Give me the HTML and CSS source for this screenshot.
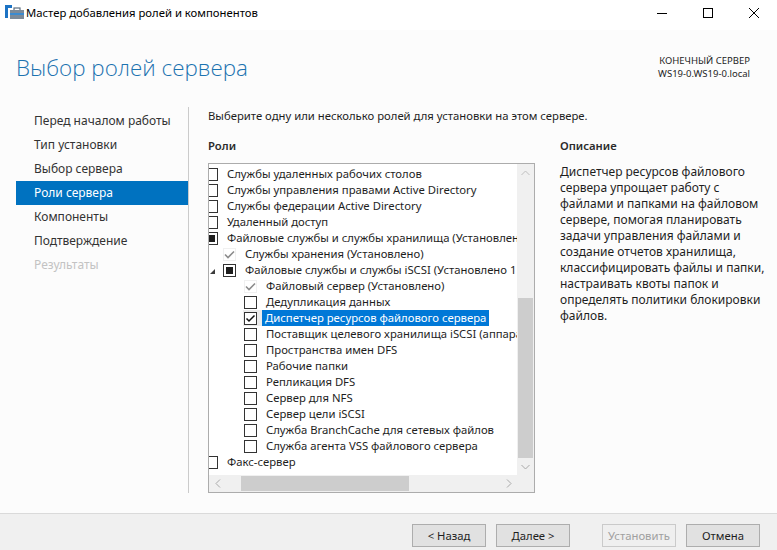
FILE: index.html
```html
<!DOCTYPE html>
<html lang="ru">
<head>
<meta charset="utf-8">
<title>Мастер добавления ролей и компонентов</title>
<link rel="stylesheet" href="styles.css">
</head>
<body>
<div class="window">
  <div class="titlebar">
    <svg class="app-icon" width="20" height="16" viewBox="0 0 20 16">
      <rect x="0" y="0" width="3" height="13" fill="#1d73c4"/>
      <rect x="0" y="0" width="7" height="3" fill="#1d73c4"/>
      <rect x="9" y="3" width="6" height="3" fill="none" stroke="#5d6f80" stroke-width="1.2"/>
      <rect x="5" y="5" width="14" height="9" fill="#7a8a99"/>
      <rect x="5" y="8" width="14" height="2" fill="#3a8bd0"/>
    </svg>
    <span class="title">Мастер добавления ролей и компонентов</span>
    <div class="controls">
      <span class="ctl"><svg width="10" height="10" viewBox="0 0 10 10"><path d="M0 5.5H10" stroke="#000" stroke-width="1"/></svg></span>
      <span class="ctl"><svg width="10" height="10" viewBox="0 0 10 10"><rect x="0.5" y="0.5" width="9" height="9" fill="none" stroke="#000" stroke-width="1"/></svg></span>
      <span class="ctl"><svg width="10" height="10" viewBox="0 0 10 10"><path d="M0 0L10 10M10 0L0 10" stroke="#000" stroke-width="1"/></svg></span>
    </div>
  </div>

  <div class="main">
    <div class="header">
      <h1 class="page-title">Выбор ролей сервера</h1>
      <div class="server">
        <div>КОНЕЧНЫЙ СЕРВЕР</div>
        <div>WS19-0.WS19-0.local</div>
      </div>
    </div>

    <div class="body">
      <nav class="nav">
        <div class="nav-item">Перед началом работы</div>
        <div class="nav-item">Тип установки</div>
        <div class="nav-item">Выбор сервера</div>
        <div class="nav-item active">Роли сервера</div>
        <div class="nav-item">Компоненты</div>
        <div class="nav-item">Подтверждение</div>
        <div class="nav-item disabled">Результаты</div>
      </nav>

      <div class="page">
        <p class="intro">Выберите одну или несколько ролей для установки на этом сервере.</p>
        <div class="cols">
          <div class="roles">
            <div class="section-label">Роли</div>
            <div class="listbox">
              <div class="viewport">
                <div class="tree">
                  <div class="row"><span class="cb"></span><span class="lbl">Службы удаленных рабочих столов</span></div>
                  <div class="row"><span class="cb"></span><span class="lbl">Службы управления правами Active Directory</span></div>
                  <div class="row"><span class="cb"></span><span class="lbl">Службы федерации Active Directory</span></div>
                  <div class="row"><span class="cb"></span><span class="lbl">Удаленный доступ</span></div>
                  <div class="row"><span class="cb partial"></span><span class="lbl">Файловые службы и службы хранилища (Установлено 3 из 12)</span></div>
                  <div class="row l1"><span class="indent"></span><span class="cb installed"><svg width="11" height="11" viewBox="0 0 11 11"><path d="M1 5.5L4 8.5L10 2.5" fill="none" stroke="#8c8c8c" stroke-width="1.6"/></svg></span><span class="lbl">Службы хранения (Установлено)</span></div>
                  <div class="row l1"><span class="indent"><span class="expander"></span></span><span class="cb partial"></span><span class="lbl">Файловые службы и службы iSCSI (Установлено 1 из 11)</span></div>
                  <div class="row l2"><span class="indent"></span><span class="cb installed"><svg width="11" height="11" viewBox="0 0 11 11"><path d="M1 5.5L4 8.5L10 2.5" fill="none" stroke="#8c8c8c" stroke-width="1.6"/></svg></span><span class="lbl">Файловый сервер (Установлено)</span></div>
                  <div class="row l2"><span class="indent"></span><span class="cb"></span><span class="lbl">Дедупликация данных</span></div>
                  <div class="row l2 selected"><span class="indent"></span><span class="hot"><span class="cb"><svg width="11" height="11" viewBox="0 0 11 11"><path d="M1.5 5.5L4 8L9.5 2.5" fill="none" stroke="#111" stroke-width="1.5"/></svg></span></span><span class="lbl">Диспетчер ресурсов файлового сервера</span></div>
                  <div class="row l2"><span class="indent"></span><span class="cb"></span><span class="lbl">Поставщик целевого хранилища iSCSI (аппаратный поставщик VDS и VSS)</span></div>
                  <div class="row l2"><span class="indent"></span><span class="cb"></span><span class="lbl">Пространства имен DFS</span></div>
                  <div class="row l2"><span class="indent"></span><span class="cb"></span><span class="lbl">Рабочие папки</span></div>
                  <div class="row l2"><span class="indent"></span><span class="cb"></span><span class="lbl">Репликация DFS</span></div>
                  <div class="row l2"><span class="indent"></span><span class="cb"></span><span class="lbl">Сервер для NFS</span></div>
                  <div class="row l2"><span class="indent"></span><span class="cb"></span><span class="lbl">Сервер цели iSCSI</span></div>
                  <div class="row l2"><span class="indent"></span><span class="cb"></span><span class="lbl">Служба BranchCache для сетевых файлов</span></div>
                  <div class="row l2"><span class="indent"></span><span class="cb"></span><span class="lbl">Служба агента VSS файлового сервера</span></div>
                  <div class="row"><span class="cb"></span><span class="lbl">Факс-сервер</span></div>
                </div>
              </div>
              <div class="vscroll">
                <div class="arrow"><svg width="9" height="6" viewBox="0 0 9 6"><path d="M0.5 5L4.5 1L8.5 5" fill="none" stroke="#bfbfbf"/></svg></div>
                <div class="vtrack"><div class="vthumb"></div></div>
                <div class="arrow"><svg width="9" height="6" viewBox="0 0 9 6"><path d="M0.5 1L4.5 5L8.5 1" fill="none" stroke="#a8a8a8"/></svg></div>
              </div>
              <div class="hscroll">
                <div class="arrow"><svg width="6" height="9" viewBox="0 0 6 9"><path d="M5 0.5L1 4.5L5 8.5" fill="none" stroke="#a8a8a8"/></svg></div>
                <div class="htrack"><div class="hthumb"></div></div>
                <div class="arrow"><svg width="6" height="9" viewBox="0 0 6 9"><path d="M1 0.5L5 4.5L1 8.5" fill="none" stroke="#a8a8a8"/></svg></div>
              </div>
              <div class="corner"></div>
            </div>
          </div>
          <div class="desc">
            <div class="section-label">Описание</div>
            <p class="desc-text">Диспетчер ресурсов файлового<br>сервера упрощает работу с<br>файлами и папками на файловом<br>сервере, помогая планировать<br>задачи управления файлами и<br>создание отчетов хранилища,<br>классифицировать файлы и папки,<br>настраивать квоты папок и<br>определять политики блокировки<br>файлов.</p>
          </div>
        </div>
      </div>
    </div>
  </div>

  <div class="footer">
    <button class="btn">&lt; Назад</button>
    <button class="btn">Далее &gt;</button>
    <button class="btn disabled-btn gap">Установить</button>
    <button class="btn">Отмена</button>
  </div>
</div>
</body>
</html>
```

FILE: styles.css
```css
* { box-sizing: border-box; }
html, body { margin: 0; padding: 0; }
body {
  font-family: "Noto Sans", "Open Sans", sans-serif;
  font-size: 11.3px;
  color: #1e1e1e;
  background: #fff;
}
.window {
  width: 777px;
  height: 550px;
  display: flex;
  flex-direction: column;
  overflow: hidden;
}

/* title bar */
.titlebar {
  height: 30px;
  flex: none;
  display: flex;
  align-items: center;
  background: #fff;
  padding: 0 0 5px 5px;
}
.app-icon { flex: none; margin-top: 1px; }
.title { margin-left: 1px; color: #000; font-size: 11.3px; }
.controls { margin-left: auto; display: flex; height: 25px; }
.ctl {
  width: 46px;
  height: 25px;
  display: flex;
  align-items: center;
  justify-content: center;
}

/* main */
.main {
  flex: 1;
  background: #fcfcfc;
  display: flex;
  flex-direction: column;
  padding-bottom: 20px;
}
.header {
  height: 77px;
  flex: none;
  display: flex;
  justify-content: space-between;
  align-items: flex-start;
}
.page-title {
  margin: 22px 0 0 16px;
  font-family: "Open Sans", "Noto Sans", sans-serif;
  font-size: 22.4px;
  line-height: 32px;
  font-weight: 300;
  color: #1c73b0;
}
.server {
  margin: 24px 27px 0 0;
  text-align: right;
  font-size: 9.5px;
  line-height: 13px;
  color: #1e1e1e;
}

.body {
  flex: 1;
  display: flex;
  min-height: 0;
}
.nav {
  width: 189px;
  flex: none;
  padding: 2px 0 0 16px;
  border-right: 1px solid #cbcbcb;
  font-size: 12px;
}
.nav-item {
  height: 24px;
  line-height: 24px;
  padding-left: 18px;
  color: #333;
  white-space: nowrap;
}
.nav-item.active { background: #0072c0; color: #fff; }
.nav-item.disabled { color: #c3c3c3; }

.page {
  flex: 1;
  padding-left: 19px;
  display: flex;
  flex-direction: column;
  min-width: 0;
}
.intro {
  margin: 1px 0 0 0;
  line-height: 16px;
}
.cols {
  flex: 1;
  display: flex;
  gap: 25px;
  margin-top: 14px;
  min-height: 0;
}
.roles {
  width: 327px;
  flex: none;
  display: flex;
  flex-direction: column;
}
.section-label {
  line-height: 16px;
  font-weight: 600;
  color: #2b2b2b;
}

.listbox {
  margin-top: 9px;
  flex: 1;
  border: 1px solid #acacac;
  background: #fff;
  display: grid;
  grid-template-columns: 1fr 17px;
  grid-template-rows: 1fr 17px;
  min-height: 0;
}
.viewport {
  overflow: hidden;
}
.tree {
  margin: 2px 0 0 -4px;
}
.row {
  height: 16px;
  display: flex;
  align-items: center;
  white-space: nowrap;
}
.indent { flex: none; height: 16px; display: flex; align-items: center; }
.l1 .indent { width: 18px; }
.l2 .indent { width: 39px; }
.l2.selected .indent { width: 38px; }
.expander {
  width: 0; height: 0;
  margin-left: 5px;
  margin-top: 2px;
  border-left: 5px solid transparent;
  border-bottom: 5px solid #3c3c3c;
}
.cb {
  flex: none;
  width: 13px;
  height: 13px;
  border: 1px solid #333;
  background: #fff;
  margin-right: 6px;
  display: flex;
  align-items: center;
  justify-content: center;
}
.cb svg { display: block; }
.cb.partial::after {
  content: "";
  width: 7px;
  height: 7px;
  background: #1e1e1e;
}
.cb.installed { border-color: #f0f0f0; background: transparent; }
.hot {
  flex: none;
  height: 16px;
  display: flex;
  align-items: center;
  background: #ececec;
  padding: 0 5px 0 1px;
}
.hot .cb { margin-right: 0; }
.lbl {
  padding: 0 3px;
  line-height: 16px;
  color: #1e1e1e;
}
.selected .lbl { background: #0078d7; color: #fff; }

.vscroll {
  background: #f0f0f0;
  display: flex;
  flex-direction: column;
}
.vscroll .arrow { height: 17px; flex: none; display: flex; align-items: center; justify-content: center; }
.vtrack { flex: 1; display: flex; flex-direction: column; justify-content: flex-end; }
.vthumb { height: 160px; background: #cdcdcd; margin: 0 1px; }
.hscroll {
  background: #f0f0f0;
  display: flex;
}
.hscroll .arrow { width: 17px; flex: none; display: flex; align-items: center; justify-content: center; }
.htrack { flex: 1; display: flex; align-items: stretch; }
.hthumb { width: 168px; margin: 1px 0 1px 15px; background: #cdcdcd; }
.corner { background: #f0f0f0; }

.desc { flex: 1; min-width: 0; }
.desc-text {
  margin: 10px 0 0 0;
  font-size: 12px;
  line-height: 16px;
  color: #1e1e1e;
  white-space: nowrap;
}

/* footer */
.footer {
  height: 37px;
  flex: none;
  background: #f0f0f0;
  border-top: 1px solid #dadada;
  display: flex;
  justify-content: flex-end;
  align-items: flex-start;
  padding: 10px 17px 0 0;
  gap: 10px;
}
.btn {
  width: 74px;
  height: 23px;
  background: #e1e1e1;
  border: 1px solid #adadad;
  font-family: inherit;
  font-size: 11.3px;
  color: #1e1e1e;
  padding: 0;
}
.btn.gap { margin-left: 22px; }
.btn.disabled-btn { background: #efefef; border-color: #cacaca; color: #a0a0a0; }
```
